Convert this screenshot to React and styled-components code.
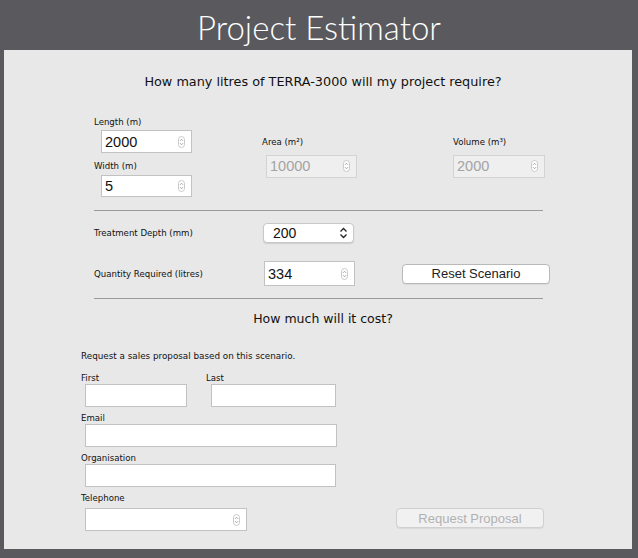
import React from "react";
import styled, { createGlobalStyle } from "styled-components";

const GlobalStyle = createGlobalStyle`
  body {
    margin: 0;
    background: #5a595e;
    font-family: "DejaVu Sans", sans-serif;
  }
`;

const Page = styled.div`
  width: 638px;
  height: 558px;
  background: #5a595e;
  display: flex;
  flex-direction: column;
`;

const Header = styled.h1`
  margin: 0;
  height: 50px;
  color: #ffffff;
  font-family: "Lato", sans-serif;
  font-weight: 300;
  font-size: 33px;
  line-height: 55px;
  text-align: center;
`;

const Panel = styled.main`
  margin: 0 6px 0 4px;
  height: 499px;
  background: #e8e8e8;
  display: flex;
  flex-direction: column;
`;

const Heading = styled.h2`
  margin: ${(p) => p.top}px 0 0 0;
  font-family: "DejaVu Sans", sans-serif;
  font-weight: 400;
  font-size: ${(p) => p.size || 12.8}px;
  line-height: 16px;
  color: #111;
  text-align: center;
  padding-left: 10px;
`;

const Label = styled.label`
  display: block;
  font-family: "DejaVu Sans", sans-serif;
  font-size: 8.6px;
  line-height: 12px;
  color: #111;
  width: ${(p) => (p.w ? `${p.w}px` : "auto")};
  flex-shrink: 0;
`;

const CalcRow = styled.div`
  display: flex;
  align-items: center;
  margin-top: 26px;
  padding-left: 90px;
`;

const Column = styled.div`
  width: ${(p) => (p.w ? `${p.w}px` : "auto")};
  display: flex;
  flex-direction: column;
`;

const Field = styled.div`
  box-sizing: border-box;
  display: flex;
  align-items: center;
  width: ${(p) => p.w}px;
  height: ${(p) => p.h || 23}px;
  margin: ${(p) => p.m || "0"};
  padding: 0 6px 0 3px;
  background: ${(p) => (p.disabled ? "#efefef" : "#ffffff")};
  border: 1px solid ${(p) => (p.disabled ? "#d3d3d3" : "#c2c2c2")};
`;

const FieldInput = styled.input`
  flex: 1;
  min-width: 0;
  border: 0;
  outline: 0;
  padding: 0;
  background: transparent;
  font-family: "Liberation Sans", sans-serif;
  font-size: 14.5px;
  color: #111;
  &:disabled {
    color: #a3a3a3;
  }
`;

const Rule = styled.hr`
  margin: ${(p) => p.top}px 0 0 90px;
  width: 449px;
  height: 0;
  border: 0;
  border-top: 1px solid #9a9a9a;
`;

const OptionRow = styled.div`
  display: flex;
  align-items: center;
  margin-top: ${(p) => p.top}px;
  padding-left: 90px;
`;

const Select = styled.div`
  box-sizing: border-box;
  width: 91px;
  height: 20px;
  display: flex;
  align-items: center;
  justify-content: space-between;
  padding: 0 5px 0 9px;
  background: #ffffff;
  border: 1px solid #c8c8c8;
  border-radius: 4px;
  box-shadow: 0 1px 1px rgba(0, 0, 0, 0.12);
  font-family: "Liberation Sans", sans-serif;
  font-size: 14px;
  color: #111;
`;

const Button = styled.button`
  box-sizing: border-box;
  width: 148px;
  height: 20px;
  margin: 0 0 ${(p) => p.mb || 0}px ${(p) => p.ml || 0}px;
  padding: 0;
  background: ${(p) => (p.disabled ? "#f1f1f1" : "#ffffff")};
  border: 1px solid ${(p) => (p.disabled ? "#d0d0d0" : "#b9b9b9")};
  border-radius: 4px;
  box-shadow: 0 1px 0 rgba(0, 0, 0, 0.06);
  font-family: "Liberation Sans", sans-serif;
  font-size: 13px;
  color: ${(p) => (p.disabled ? "#b1b1b1" : "#222")};
`;

const Form = styled.form`
  display: flex;
  flex-direction: column;
  padding-left: 77px;
  margin: 0;
`;

const Intro = styled.p`
  margin: 23px 0 0 0;
  font-family: "DejaVu Sans", sans-serif;
  font-size: 8.8px;
  line-height: 12px;
  color: #111;
`;

const FormRow = styled.div`
  display: flex;
  align-items: flex-end;
  margin-top: ${(p) => p.top || 0}px;
`;

const FormGroup = styled.div`
  display: flex;
  flex-direction: column;
  margin-right: ${(p) => p.mr || 0}px;
`;

const Spinner = () => (
  <svg width="7" height="12" viewBox="0 0 7 12" style={{ flexShrink: 0 }}>
    <rect x="0.5" y="0.5" width="6" height="11" rx="3" fill="#fff" stroke="#c9c9c9" />
    <path d="M2 4.8 L3.5 3.3 L5 4.8" fill="none" stroke="#8a8a8a" strokeWidth="0.8" />
    <path d="M2 7.2 L3.5 8.7 L5 7.2" fill="none" stroke="#8a8a8a" strokeWidth="0.8" />
  </svg>
);

const UpDown = () => (
  <svg width="9" height="12" viewBox="0 0 9 12">
    <path d="M1.5 4.5 L4.5 1.5 L7.5 4.5" fill="none" stroke="#222" strokeWidth="1.3" />
    <path d="M1.5 7.5 L4.5 10.5 L7.5 7.5" fill="none" stroke="#222" strokeWidth="1.3" />
  </svg>
);

const NumberField = ({ value, w = 91, h, m, disabled }) => (
  <Field w={w} h={h} m={m} disabled={disabled}>
    <FieldInput value={value} disabled={disabled} readOnly />
    <Spinner />
  </Field>
);

export default function App() {
  return (
    <Page>
      <GlobalStyle />
      <Header>Project Estimator</Header>
      <Panel>
        <Heading top={24}>How many litres of TERRA-3000 will my project require?</Heading>

        <CalcRow>
          <Column w={168}>
            <Label>Length (m)</Label>
            <NumberField value="2000" m="2px 0 0 7px" />
            <Label style={{ marginTop: 7 }}>Width (m)</Label>
            <NumberField value="5" m="3px 0 0 7px" h={22} />
          </Column>
          <Column w={191}>
            <Label>Area (m²)</Label>
            <NumberField value="10000" m="7px 0 0 4px" disabled />
          </Column>
          <Column>
            <Label>Volume (m³)</Label>
            <NumberField value="2000" m="7px 0 0 0" w={92} disabled />
          </Column>
        </CalcRow>

        <Rule top={13} />

        <OptionRow top={12}>
          <Label w={169}>Treatment Depth (mm)</Label>
          <Select>
            <span>200</span>
            <UpDown />
          </Select>
        </OptionRow>

        <OptionRow top={18}>
          <Label w={170}>Quantity Required (litres)</Label>
          <NumberField value="334" h={25} />
          <Button type="button" ml={47}>Reset Scenario</Button>
        </OptionRow>

        <Rule top={12} />

        <Heading top={12} size={12.5}>How much will it cost?</Heading>

        <Form>
          <Intro>Request a sales proposal based on this scenario.</Intro>
          <FormRow top={10}>
            <FormGroup mr={19}>
              <Label>First</Label>
              <Field w={102} m="0 0 0 4px" />
            </FormGroup>
            <FormGroup>
              <Label>Last</Label>
              <Field w={125} m="0 0 0 5px" />
            </FormGroup>
          </FormRow>
          <FormGroup>
            <Label style={{ marginTop: 5 }}>Email</Label>
            <Field w={252} m="0 0 0 4px" />
          </FormGroup>
          <FormGroup>
            <Label style={{ marginTop: 5 }}>Organisation</Label>
            <Field w={251} m="0 0 0 4px" />
          </FormGroup>
          <FormRow>
            <FormGroup mr={149}>
              <Label style={{ marginTop: 5 }}>Telephone</Label>
              <NumberField value="" w={162} m="4px 0 0 4px" />
            </FormGroup>
            <Button type="button" disabled mb={3}>Request Proposal</Button>
          </FormRow>
        </Form>
      </Panel>
    </Page>
  );
}
